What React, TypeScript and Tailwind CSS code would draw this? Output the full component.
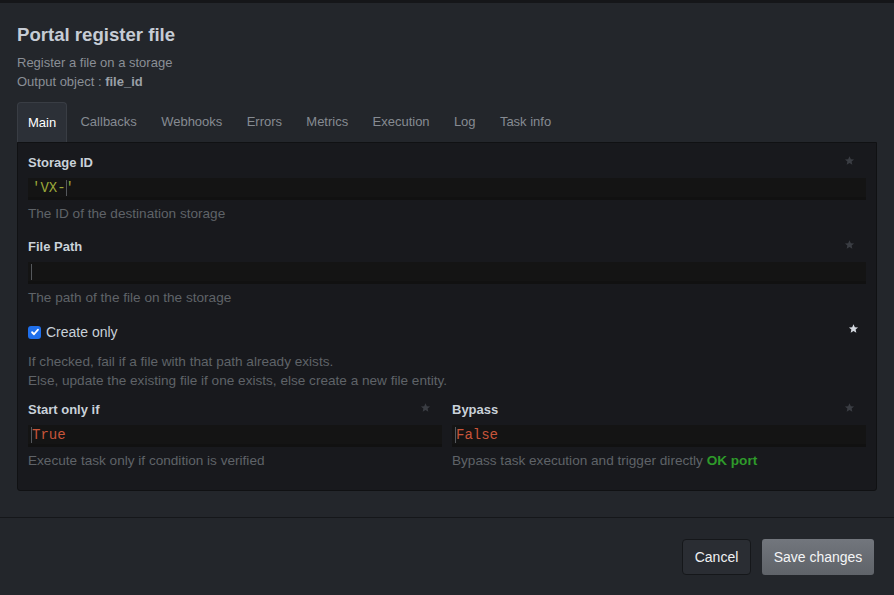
import React from "react";

const Star = ({ className }: { className: string }) => (
  <svg viewBox="0 0 24 24" className={className} fill="currentColor">
    <path d="M12 2.5l2.9 6.6 7.1.6-5.4 4.7 1.6 7-6.2-3.8-6.2 3.8 1.6-7L2 9.7l7.1-.6z" />
  </svg>
);

const tabs = ["Main", "Callbacks", "Webhooks", "Errors", "Metrics", "Execution", "Log", "Task info"];

function Field({
  label,
  value,
  valueClass,
  help,
  cursorStart,
  cursorEnd,
}: {
  label: string;
  value: string;
  valueClass: string;
  help: React.ReactNode;
  cursorStart?: boolean;
  cursorEnd?: boolean;
}) {
  return (
    <div className="relative">
      <Star className="absolute right-[11px] top-[1px] w-[11px] h-[11px] text-[#3a3d43]" />
      <div className="text-[13px] leading-[18px] font-bold text-[#c9d1d9]">{label}</div>
      <div className="mt-[6px] h-[22px] bg-[#141414] border-b-[3px] border-[#111111] flex items-center pl-[3px]">
        {cursorStart && <span className="w-px h-[16px] bg-[#55585c]" />}
        <span className={"font-['Liberation_Mono',monospace] text-[14px] leading-[18px] " + valueClass}>{value}</span>
        {cursorEnd && <span className="w-px h-[16px] bg-[#55585c] -ml-[8px]" />}
      </div>
      <div className="mt-[5px] text-[13.6px] leading-[18px] text-[#5f6368]">{help}</div>
    </div>
  );
}

export default function App() {
  return (
    <div className="w-[894px] h-[595px] overflow-hidden bg-[#23262b] font-['Liberation_Sans',Arial,sans-serif]">
      <div className="h-[3px] bg-[#151619]" />
      <div className="px-[17px]">
        <h1 className="mt-[21px] text-[18.6px] leading-[22px] font-bold text-[#c6ccd5]">Portal register file</h1>
        <div className="mt-[7px] text-[13px] leading-[19px] text-[#8a8f96]">Register a file on a storage</div>
        <div className="text-[13px] leading-[19px] text-[#8a8f96]">
          Output object : <span className="font-bold text-[#9aa0a7]">file_id</span>
        </div>
        <div className="mt-[11px] flex gap-[2.3px] h-[40px]">
          {tabs.map((t, i) => (
            <div
              key={t}
              className={
                "flex items-center text-[13px] rounded-t-[4px] " +
                (i === 0
                  ? "bg-[#2c3037] border border-b-0 border-[#393d44] text-white px-[10px]"
                  : "px-[11px] text-[#868b92]")
              }
            >
              {t}
            </div>
          ))}
        </div>
        <div className="h-[349px] bg-[#18191d] border border-[#101113] rounded-b-[3px] px-[10px] pt-[11px]">
          <Field
            label="Storage ID"
            value="'VX-'"
            valueClass="text-[#9aa83a] pl-[1px]"
            help="The ID of the destination storage"
            cursorEnd
          />
          <div className="mt-[15px]">
            <Field label="File Path" value="" valueClass="" help="The path of the file on the storage" cursorStart />
          </div>
          <div className="relative mt-[15px] flex items-center h-[20px]">
            <span className="w-[13px] h-[13px] rounded-[3px] bg-[#1f6feb] flex items-center justify-center">
              <svg viewBox="0 0 12 12" className="w-[10px] h-[10px]" fill="none" stroke="white" strokeWidth="2.2" strokeLinecap="round" strokeLinejoin="round">
                <path d="M2.5 6.3l2.3 2.4L9.6 3.2" />
              </svg>
            </span>
            <span className="ml-[5px] text-[14px] text-[#c9d1d9]">Create only</span>
            <Star className="absolute right-[7px] top-[1px] w-[11px] h-[11px] text-[#d3d8df]" />
          </div>
          <div className="mt-[10px] text-[13.6px] leading-[19px] text-[#5f6368]">
            <div>If checked, fail if a file with that path already exists.</div>
            <div>Else, update the existing file if one exists, else create a new file entity.</div>
          </div>
          <div className="mt-[11px] grid grid-cols-2 gap-[10px]">
            <Field label="Start only if" value="True" valueClass="text-[#c8553a]" help="Execute task only if condition is verified" cursorStart />
            <Field
              label="Bypass"
              value="False"
              valueClass="text-[#c8553a]"
              help={
                <>
                  Bypass task execution and trigger directly{" "}
                  <span className="font-bold text-[#2e9a2a]">OK port</span>
                </>
              }
              cursorStart
            />
          </div>
        </div>
      </div>
      <div className="mt-[26px] border-t border-[#15171a] flex justify-end gap-[11px] pr-[20px] pt-[21px]">
        <button className="h-[36px] w-[69px] rounded-[4px] bg-[#2a2d33] border border-[#15171a] text-[14px] text-[#eef0f2]">
          Cancel
        </button>
        <button className="h-[36px] w-[112px] rounded-[3px] bg-gradient-to-b from-[#72767d] to-[#5f6369] text-[14px] text-[#f4f5f6]">
          Save changes
        </button>
      </div>
    </div>
  );
}
